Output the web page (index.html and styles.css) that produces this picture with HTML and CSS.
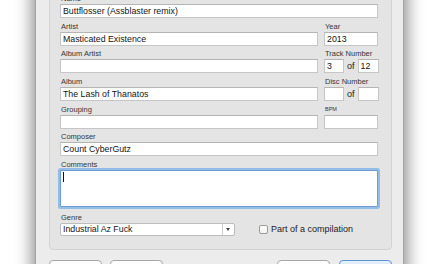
FILE: index.html
```html
<!DOCTYPE html>
<html lang="en">
<head>
  <meta charset="UTF-8" />
  <title>Info</title>
  <link rel="stylesheet" href="styles.css">
</head>
<body>
  <div class="window">
    <div class="group">
      <div class="field">
        <label>Name</label>
        <input class="text" type="text" value="Buttflosser (Assblaster remix)">
      </div>
      <div class="row">
        <div class="field">
          <label>Artist</label>
          <input class="text" type="text" value="Masticated Existence">
        </div>
        <div class="field">
          <label>Year</label>
          <input class="text" type="text" value="2013">
        </div>
      </div>
      <div class="row">
        <div class="field">
          <label>Album Artist</label>
          <input class="text" type="text" value="">
        </div>
        <div class="field">
          <label>Track Number</label>
          <div class="pair">
            <input class="text" type="text" value="3">
            <span class="of">of</span>
            <input class="text" type="text" value="12">
          </div>
        </div>
      </div>
      <div class="row">
        <div class="field">
          <label>Album</label>
          <input class="text" type="text" value="The Lash of Thanatos">
        </div>
        <div class="field">
          <label>Disc Number</label>
          <div class="pair">
            <input class="text" type="text" value="">
            <span class="of">of</span>
            <input class="text" type="text" value="">
          </div>
        </div>
      </div>
      <div class="row">
        <div class="field">
          <label>Grouping</label>
          <input class="text" type="text" value="">
        </div>
        <div class="field">
          <label class="tiny">BPM</label>
          <input class="text" type="text" value="">
        </div>
      </div>
      <div class="field">
        <label>Composer</label>
        <input class="text" type="text" value="Count CyberGutz">
      </div>
      <div class="field">
        <label>Comments</label>
        <div class="comments"><span class="caret"></span></div>
      </div>
      <div class="field genre">
        <label>Genre</label>
        <div class="genre-row">
          <div class="combo">
            <span class="combo-text">Industrial Az Fuck</span>
            <span class="combo-arrow"></span>
          </div>
          <span class="check"></span>
          <span class="check-label">Part of a compilation</span>
        </div>
      </div>
    </div>
    <div class="buttons">
      <span class="btn"></span>
      <span class="btn"></span>
      <span class="btn push"></span>
      <span class="btn default"></span>
    </div>
  </div>
</body>
</html>
```

FILE: styles.css
```css
html, body {
  margin: 0;
  height: 264px;
  overflow: hidden;
  background: #fff;
}
body {
  padding-left: 35px;
  font-family: "Liberation Sans", Arial, sans-serif;
}
.window {
  width: 369px;
  box-sizing: border-box;
  margin-top: -27px;
  padding: 10px 11px 10px 13px;
  background: #ececec;
  border: 1px solid #a4a4a4;
  box-shadow: 0 0 16px 3px rgba(0, 0, 0, 0.45);
}
.group {
  display: flex;
  flex-direction: column;
  gap: 2.67px;
  padding: 8px 13px 13px 10px;
  background: #e4e4e4;
  border: 1px solid #d3d3d3;
  border-radius: 4px;
}
.row {
  display: grid;
  grid-template-columns: 1fr 54px;
  column-gap: 6px;
}
.field {
  display: flex;
  flex-direction: column;
}
label {
  display: block;
  height: 11px;
  line-height: 11px;
  padding-left: 1px;
  font-size: 7.5px;
  color: #353535;
}
label.tiny {
  font-size: 5.5px;
}
.text {
  display: block;
  width: 100%;
  height: 14px;
  box-sizing: border-box;
  margin: 0;
  padding: 0 2px;
  border: 1px solid #c6c6c6;
  border-top-color: #b4b4b4;
  border-radius: 0;
  background: #fff;
  font-family: "Liberation Sans", Arial, sans-serif;
  font-size: 8.8px;
  color: #141414;
  outline: none;
}
.pair {
  display: flex;
  align-items: center;
  gap: 3px;
}
.pair .text {
  flex: 0 0 20px;
  width: 20px;
}
.pair .text:last-child {
  flex-basis: 21px;
}
.of {
  flex: 1;
  text-align: center;
  font-size: 9px;
  color: #222;
}
.comments {
  height: 37px;
  box-sizing: border-box;
  padding: 1px 2px;
  background: #fff;
  border: 1px solid #6d9fd6;
  box-shadow: 0 0 0 2px #93bce6;
  border-radius: 1px;
}
.caret {
  display: block;
  width: 1px;
  height: 10px;
  background: #111;
}
.genre {
  margin-top: 2px;
}
.genre-row {
  display: flex;
  align-items: center;
}
.combo {
  display: flex;
  width: 175px;
  height: 13px;
  box-sizing: border-box;
  background: #fff;
  border: 1px solid #bcbcbc;
  border-radius: 2px;
}
.combo-text {
  flex: 1;
  padding-left: 2px;
  font-size: 8.8px;
  line-height: 11px;
  color: #141414;
}
.combo-arrow {
  width: 11px;
  border-left: 1px solid #cfcfcf;
  position: relative;
}
.combo-arrow::after {
  content: "";
  position: absolute;
  left: 3px;
  top: 4px;
  border-left: 2.5px solid transparent;
  border-right: 2.5px solid transparent;
  border-top: 3px solid #444;
}
.check {
  width: 9px;
  height: 9px;
  box-sizing: border-box;
  margin-left: 24px;
  border: 1px solid #9c9c9c;
  border-radius: 2px;
  background: linear-gradient(#fff, #f1f1f1);
}
.check-label {
  margin-left: 3px;
  font-size: 9px;
  color: #222;
}
.buttons {
  display: flex;
  padding-top: 10px;
  gap: 8px;
}
.btn {
  width: 53px;
  height: 20px;
  box-sizing: border-box;
  border: 1px solid #a8a8a8;
  border-radius: 4px;
  background: linear-gradient(#fff, #f1f1f1);
}
.btn.push {
  margin-left: auto;
}
.btn.default {
  margin-left: 1px;
  border-color: #5d92d6;
  background: linear-gradient(#e9f2fd, #9cc5f2);
}
```
